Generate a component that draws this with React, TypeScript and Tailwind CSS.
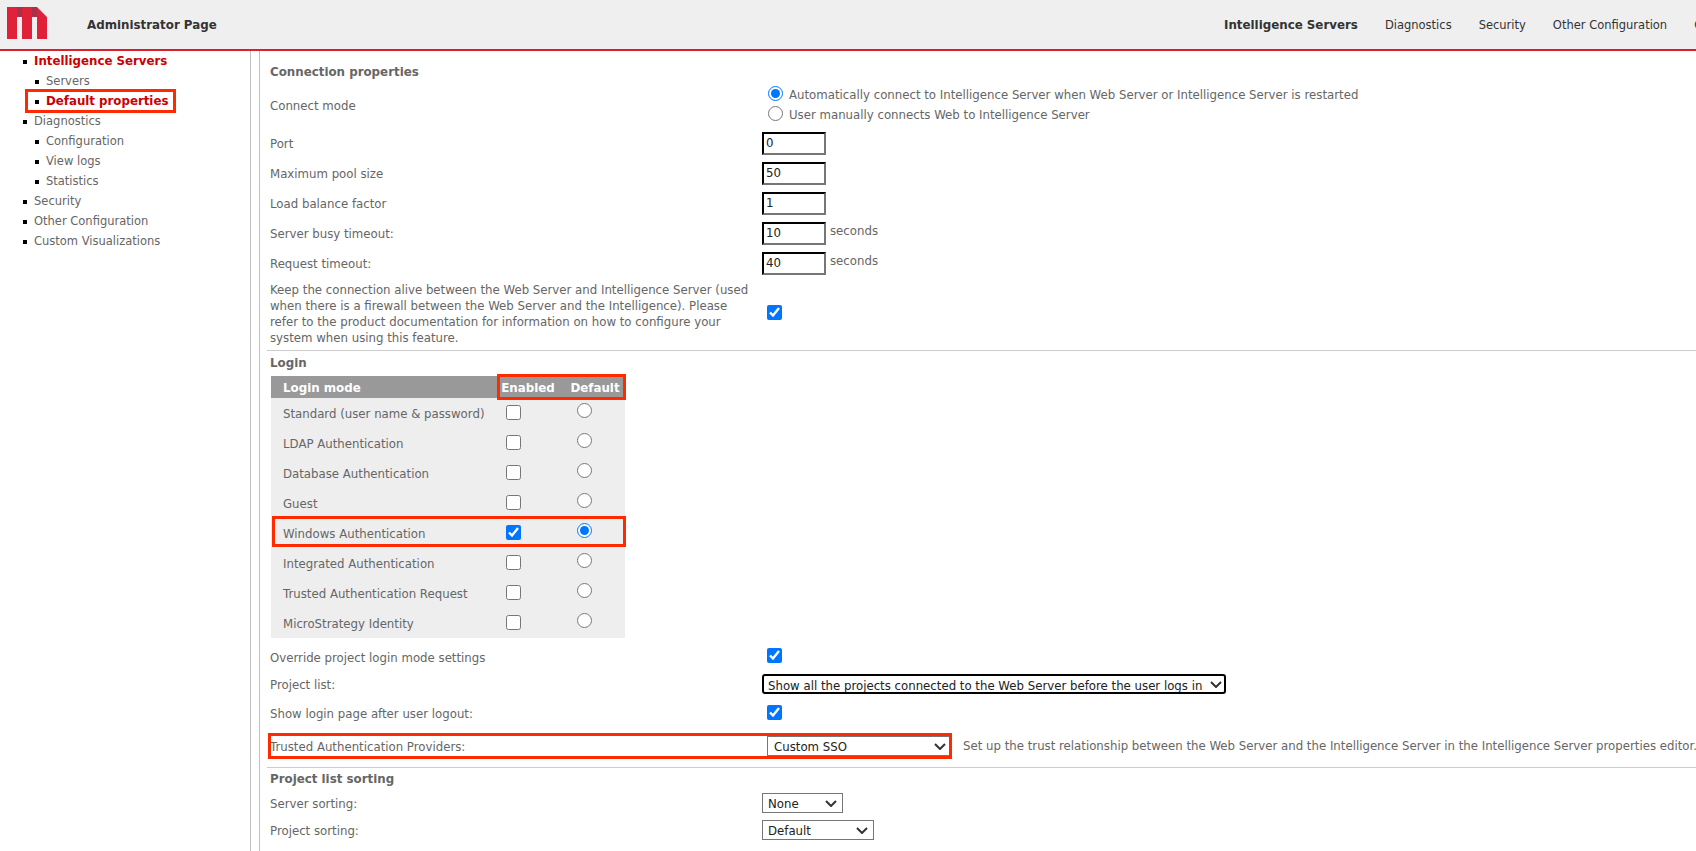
import React from "react";

const sideNav = [
  { label: "Intelligence Servers", sub: false, active: true },
  { label: "Servers", sub: true },
  { label: "Default properties", sub: true, active: true, boxed: true },
  { label: "Diagnostics", sub: false },
  { label: "Configuration", sub: true },
  { label: "View logs", sub: true },
  { label: "Statistics", sub: true },
  { label: "Security", sub: false },
  { label: "Other Configuration", sub: false },
  { label: "Custom Visualizations", sub: false },
];

const loginModes = [
  "Standard (user name & password)",
  "LDAP Authentication",
  "Database Authentication",
  "Guest",
  "Windows Authentication",
  "Integrated Authentication",
  "Trusted Authentication Request",
  "MicroStrategy Identity",
];

const Check = ({ on = false }: { on?: boolean }) => (
  <input type="checkbox" checked={on} readOnly className="w-[15px] h-[15px] m-0" />
);

const Radio = ({ on = false, name, className = "" }: { on?: boolean; name: string; className?: string }) => (
  <input type="radio" name={name} checked={on} readOnly className={`w-[15px] h-[15px] m-0 ${className}`} />
);

const TextBox = ({ value }: { value: string }) => (
  <input
    type="text"
    value={value}
    readOnly
    className="w-[64px] h-[23px] px-[2px] border-2 border-t-black border-l-black border-r-[#767676] border-b-[#767676] text-[#222] outline-none"
  />
);

// native arrow is too thin here, so the chevron is drawn over the select
const Dropdown = ({ value, className, arrow }: { value: string; className: string; arrow: string }) => (
  <div className="relative flex">
    <select className={`h-[20px] pt-[2px] appearance-none text-[#222] ${className}`}>
      <option>{value}</option>
    </select>
    <svg width="12" height="7" viewBox="0 0 12 7" className={`absolute top-[7px] pointer-events-none ${arrow}`}>
      <path d="M1 1L6 6L11 1" fill="none" stroke="#333" strokeWidth="2" />
    </svg>
  </div>
);

const Row = ({ label, children, className = "h-[30px]" }: { label: string; children: React.ReactNode; className?: string }) => (
  <div className={`flex items-center ${className}`}>
    <div className="w-[492px] shrink-0 pt-[3px]">{label}</div>
    {children}
  </div>
);

export default function App() {
  return (
    <div className="h-[851px] overflow-hidden bg-white text-[11.75px] text-[#666] font-['DejaVu_Sans',sans-serif]">
      {/* Header */}
      <header className="flex items-center justify-between h-[51px] pt-[2px] bg-[#efefef] border-b-2 border-[#d9202f] text-[#333] whitespace-nowrap">
        <div className="flex items-center">
          <svg width="40" height="32" viewBox="0 0 40 32" className="ml-[7px] mt-[-5px]">
            <path d="M0 0H30L40 10V32H30V10H25V32H15V10H10V32H0Z" fill="#e0213a" />
            <path d="M10 0H15V10H10Z" fill="#a8304a" />
            <path d="M25 0H30V10H25Z" fill="#a8304a" />
          </svg>
          <span className="ml-[40px] font-bold text-[11.85px]">Administrator Page</span>
        </div>
        <nav className="flex items-center gap-[27px] mr-[-100px] w-[572px] shrink-0 text-[11.5px]">
          <span className="font-bold text-[11.85px]">Intelligence Servers</span>
          <span>Diagnostics</span>
          <span>Security</span>
          <span>Other Configuration</span>
          <span>Custom Visualizations</span>
        </nav>
      </header>

      <div className="flex">
        {/* Sidebar */}
        <aside className="w-[251px] h-[800px] shrink-0 border-r border-[#c0c0c0] pt-[1px] text-[11.5px]">
          <ul>
            {sideNav.map((item) => (
              <li key={item.label} className={`relative flex items-center h-[20px] ${item.sub ? "pl-[35px]" : "pl-[23px]"}`}>
                <span className="w-[4px] h-[4px] bg-black mr-[7px] shrink-0" />
                <span className={item.active ? "font-bold text-[11.8px] text-[#cc0000]" : ""}>{item.label}</span>
                {item.boxed && (
                  <span className="absolute left-[25px] top-[-3px] w-[151px] h-[24px] border-[3px] border-[#ff2a00]" />
                )}
              </li>
            ))}
          </ul>
        </aside>

        {/* Main */}
        <main className="ml-[8px] flex-1 min-w-0 border-l border-[#c0c0c0] pl-[7px] whitespace-nowrap">
          <div className="pl-[3px] pt-[10px]">
            <h3 className="h-[20px] font-bold text-[11.85px] leading-[22px]">Connection properties</h3>
            <div className="flex items-center h-[47px]">
              <div className="w-[492px] shrink-0 pt-[5px]">Connect mode</div>
              <div className="flex flex-col pl-[6px] gap-[5px]">
                <label className="flex items-center gap-[6px] h-[15px]">
                  <Radio name="mode" on className="mt-[-3px]" />
                  <span className="pt-[2px]">Automatically connect to Intelligence Server when Web Server or Intelligence Server is restarted</span>
                </label>
                <label className="flex items-center gap-[6px] h-[15px]">
                  <Radio name="mode" className="mt-[-3px]" />
                  <span className="pt-[2px]">User manually connects Web to Intelligence Server</span>
                </label>
              </div>
            </div>
            <Row label="Port"><TextBox value="0" /></Row>
            <Row label="Maximum pool size"><TextBox value="50" /></Row>
            <Row label="Load balance factor"><TextBox value="1" /></Row>
            <Row label="Server busy timeout:"><TextBox value="10" /><span className="ml-[4px] mt-[-2px]">seconds</span></Row>
            <Row label="Request timeout:"><TextBox value="40" /><span className="ml-[4px] mt-[-2px]">seconds</span></Row>
            <div className="flex items-center h-[72px]">
              <p className="w-[492px] shrink-0 whitespace-normal leading-[16px] pr-[9px]">
                Keep the connection alive between the Web Server and Intelligence Server (used when there is a firewall between the Web Server and the Intelligence). Please refer to the product documentation for information on how to configure your system when using this feature.
              </p>
              <div className="pl-[5px] mt-[-4px] flex"><Check on /></div>
            </div>
          </div>

          <hr className="border-[#ccc]" />

          <div className="pl-[3px]">
            <h3 className="h-[25px] font-bold text-[11.85px] leading-[25px]">Login</h3>
            <div className="relative w-[354px] ml-[1px]">
              <table className="w-[354px] bg-[#eeeeee] border-collapse table-fixed">
                <thead>
                  <tr className="h-[22px] bg-[#999] text-white">
                    <th className="w-[226px] text-left pl-[12px] pt-[3px] font-bold text-[11.85px]">Login mode</th>
                    <th className="w-[62px] text-center pt-[3px] font-bold text-[11.85px]">Enabled</th>
                    <th className="text-center pl-[6px] pt-[3px] font-bold text-[11.85px]">Default</th>
                  </tr>
                </thead>
                <tbody>
                  {loginModes.map((mode) => {
                    const on = mode === "Windows Authentication";
                    return (
                      <tr key={mode} className="h-[30px]">
                        <td className="pl-[12px] pt-[4px]">{mode}</td>
                        <td className="pl-[9px]"><div className="flex mt-[-2px]"><Check on={on} /></div></td>
                        <td className="pl-[18px]"><div className="flex mt-[-6px]"><Radio name="def" on={on} /></div></td>
                      </tr>
                    );
                  })}
                </tbody>
              </table>
              <span className="absolute left-[226px] top-[-2px] w-[129px] h-[26px] border-[3px] border-[#ff2a00]" />
              <span className="absolute left-[1px] top-[140px] w-[354px] h-[31px] border-[3px] border-[#ff2a00]" />
            </div>
            <div className="h-[4px]" />
            <Row label="Override project login mode settings"><div className="pl-[5px] flex mt-[-3px]"><Check on /></div></Row>
            <Row label="Project list:" className="h-[24px]">
              <Dropdown
                value="Show all the projects connected to the Web Server before the user logs in"
                className="w-[464px] pl-[4px] border-2 border-black rounded-[3px]"
                arrow="right-[4px]"
              />
            </Row>
            <Row label="Show login page after user logout:" className="h-[30px] mt-[2px]"><div className="pl-[5px] flex mt-[-2px]"><Check on /></div></Row>
            <div className="relative mt-[5px]">
              <Row label="Trusted Authentication Providers:" className="h-[26px]">
                <div className="pl-[5px] flex">
                  <Dropdown value="Custom SSO" className="w-[183px] pl-[6px] border border-[#767676]" arrow="right-[4px]" />
                </div>
                <span className="ml-[13px] pt-[1px]">Set up the trust relationship between the Web Server and the Intelligence Server in the Intelligence Server properties editor.</span>
              </Row>
              <span className="absolute left-[-2px] top-0 w-[684px] h-[26px] border-[3px] border-[#ff2a00]" />
            </div>
          </div>

          <hr className="border-[#ccc] mt-[8px]" />

          <div className="pl-[3px]">
            <h3 className="h-[22px] font-bold text-[11.85px] leading-[22px]">Project list sorting</h3>
            <Row label="Server sorting:" className="h-[26px]">
              <Dropdown value="None" className="w-[81px] pl-[5px] border border-[#767676]" arrow="right-[6px]" />
            </Row>
            <Row label="Project sorting:" className="h-[28px]">
              <Dropdown value="Default" className="w-[112px] pl-[5px] border border-[#767676]" arrow="right-[6px]" />
            </Row>
          </div>
        </main>
      </div>
    </div>
  );
}
